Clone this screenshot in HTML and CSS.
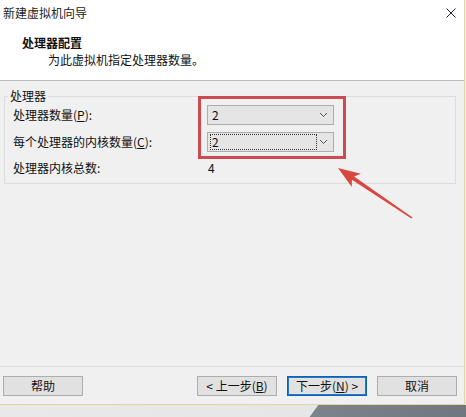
FILE: index.html
```html
<!DOCTYPE html>
<html lang="zh-CN">
<head>
  <meta charset="UTF-8" />
  <title>新建虚拟机向导</title>
  <link rel="stylesheet" href="styles.css">
</head>
<body>
  <div class="dialog">
    <div class="top">
      <div class="titlebar">
        <span class="title">新建虚拟机向导</span>
        <svg class="close" width="10" height="10" viewBox="0 0 10 10">
          <path d="M0.5 0.5 L9.5 9.5 M9.5 0.5 L0.5 9.5" stroke="#222" stroke-width="1" fill="none"/>
        </svg>
      </div>
      <div class="header">
        <div class="heading">处理器配置</div>
        <div class="subtitle">为此虚拟机指定处理器数量。</div>
      </div>
    </div>

    <div class="content">
      <fieldset class="group">
        <legend>处理器</legend>
        <div class="rows">
          <label>处理器数量(<u>P</u>):</label>
          <div class="combo">
            <span class="value">2</span>
            <svg class="chev" width="9" height="6" viewBox="0 0 9 6"><path d="M1 1 L4.5 4.5 L8 1" stroke="#555" fill="none"/></svg>
          </div>
          <label>每个处理器的内核数量(<u>C</u>):</label>
          <div class="combo">
            <span class="value focus">2</span>
            <svg class="chev" width="9" height="6" viewBox="0 0 9 6"><path d="M1 1 L4.5 4.5 L8 1" stroke="#555" fill="none"/></svg>
          </div>
          <label class="last">处理器内核总数:</label>
          <span class="total">4</span>
        </div>
      </fieldset>
    </div>

    <div class="footer">
      <button class="btn">帮助</button>
      <div class="nav">
        <button class="btn">&lt; 上一步(<u>B</u>)</button>
        <button class="btn primary">下一步(<u>N</u>) &gt;</button>
        <button class="btn">取消</button>
      </div>
    </div>
  </div>
  <div class="desk"></div>

  <div class="mark"></div>
  <svg class="arrow" width="466" height="417" viewBox="0 0 466 417">
    <polygon points="338,168 360.8,173.8 354.1,176.4 412.6,217.4 411.4,218.6 351.9,179.8 351.8,187" fill="#d8483f"/>
  </svg>
</body>
</html>
```

FILE: styles.css
```css
* {
  margin: 0;
  padding: 0;
  box-sizing: border-box;
}
html, body {
  width: 466px;
  height: 417px;
  overflow: hidden;
}
body {
  font-family: "Noto Sans CJK SC", "Noto Sans", sans-serif;
  font-size: 12px;
  line-height: 16px;
  color: #111;
  background: #ececec;
  position: relative;
}
.dialog {
  width: 465px;
  height: 405px;
  background: #f0f0f0;
  border-right: 1px solid #e2d6a4;
  border-bottom: 1px solid #e2d6a4;
  display: flex;
  flex-direction: column;
}
.top {
  background: #fff;
  border-bottom: 1px solid #bdbdbd;
  height: 81px;
}
.titlebar {
  height: 26px;
  display: flex;
  align-items: center;
  justify-content: space-between;
  padding: 0 8px 0 3px;
}
.title {
  color: #222;
}
.close {
  display: block;
  margin-top: -1px;
}
.header {
  padding: 9px 0 0 22px;
}
.heading {
  font-weight: bold;
}
.subtitle {
  margin-top: 1px;
  padding-left: 26px;
}
.content {
  flex: 1;
}
.group {
  margin: 8px 8px 0 4px;
  border: 1px solid #dcdcdc;
  padding: 0 8px 8px 8px;
}
.group legend {
  margin-left: -5px;
  padding: 0 2px;
  line-height: 14px;
}
.rows {
  margin-top: 2px;
  display: grid;
  grid-template-columns: 194px 127px;
  grid-template-rows: 20px 20px 16px;
  row-gap: 7px;
  align-items: center;
}
.rows .last,
.rows .total {
  margin-top: 2px;
}
.rows .total {
  padding-left: 1px;
}
.combo {
  height: 20px;
  background: #e5e5e5;
  border: 1px solid #adadad;
  display: flex;
  align-items: center;
  justify-content: space-between;
  padding: 0 5px 0 2px;
}
.combo .value {
  padding-left: 2px;
  line-height: 14px;
}
.combo .value.focus {
  width: 107px;
  height: 16px;
  border: 1px dotted #333;
  padding-left: 1px;
}
.chev {
  display: block;
}
.footer {
  border-top: 1px solid #dcdcdc;
  height: 38px;
  padding: 9px 7px 0 3px;
  display: flex;
  justify-content: space-between;
  align-items: flex-start;
}
.nav {
  display: flex;
  gap: 10px;
}
.btn {
  width: 80px;
  height: 20px;
  font-family: inherit;
  font-size: 12px;
  line-height: 16px;
  color: #111;
  background: #e1e1e1;
  border: 1px solid #adadad;
}
.btn.primary {
  border-color: #0a64b4;
  box-shadow: inset 0 0 0 1px #2a78c4;
}
.desk {
  height: 12px;
  background: linear-gradient(126deg, #e9e9e9 0, #e6e6e6 257px, #7c838b 258px, #70777f 100%);
}
.mark {
  position: absolute;
  left: 198px;
  top: 96px;
  width: 148px;
  height: 63px;
  border: 3px solid #cc4a52;
}
.arrow {
  position: absolute;
  left: 0;
  top: 0;
}
```
